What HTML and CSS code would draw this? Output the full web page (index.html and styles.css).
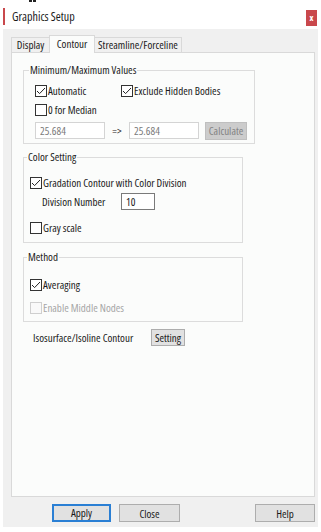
FILE: index.html
```html
<!DOCTYPE html>
<html lang="en">
<head>
  <meta charset="UTF-8">
  <title>Graphics Setup</title>
  <link rel="stylesheet" href="styles.css">
</head>
<body>

  <div class="titlebar">
    <span class="grip"></span>
    <span class="accent"></span>
    <span class="title">Graphics Setup</span>
    <button class="close" type="button">x</button>
  </div>

  <div class="dialog">
    <div class="tabs">
      <div class="tab tab-display">Display</div>
      <div class="tab tab-active">Contour</div>
      <div class="tab tab-stream">Streamline/Forceline</div>
    </div>

    <div class="panel">

      <div class="group group-minmax">
        <span class="legend">Minimum/Maximum Values</span>
        <div class="row">
          <label class="check check-auto"><span class="box checked"></span>Automatic</label>
          <label class="check"><span class="box checked"></span>Exclude Hidden Bodies</label>
        </div>
        <div class="row">
          <label class="check"><span class="box"></span>0 for Median</label>
        </div>
        <div class="row row-range">
          <input class="field field-off" type="text" value="25.684" disabled>
          <span class="arrow">=&gt;</span>
          <input class="field field-off" type="text" value="25.684" disabled>
          <button class="btn btn-off" type="button" disabled>Calculate</button>
        </div>
      </div>

      <div class="group group-color">
        <span class="legend">Color Setting</span>
        <div class="row">
          <label class="check"><span class="box checked"></span>Gradation Contour with Color Division</label>
        </div>
        <div class="row row-division">
          <span class="division-label">Division Number</span>
          <input class="field field-num" type="text" value="10">
        </div>
        <div class="row row-gray">
          <label class="check"><span class="box"></span>Gray scale</label>
        </div>
      </div>

      <div class="group group-method">
        <span class="legend">Method</span>
        <div class="row">
          <label class="check"><span class="box checked"></span>Averaging</label>
        </div>
        <div class="row row-middle">
          <label class="check check-off"><span class="box"></span>Enable Middle Nodes</label>
        </div>
      </div>

      <div class="row row-iso">
        <span class="iso-label">Isosurface/Isoline Contour</span>
        <button class="btn btn-setting" type="button">Setting</button>
      </div>

    </div>

    <div class="footer">
      <button class="btn btn-apply" type="button">Apply</button>
      <button class="btn btn-close" type="button">Close</button>
      <button class="btn btn-help" type="button">Help</button>
    </div>
    <span class="corner"></span>
  </div>

</body>
</html>
```
FILE: styles.css
```css
body {
  margin: 0;
  background: #fff;
  font-family: "Open Sans", sans-serif;
  font-stretch: 84%;
  font-size: 11px;
  line-height: 14px;
  color: #1a1a1a;
}
button, input {
  font: inherit;
  color: inherit;
}

/* title bar */
.titlebar {
  position: relative;
  height: 29px;
  display: flex;
  align-items: center;
  padding: 0 4px 0 3px;
}
.grip {
  position: absolute;
  left: 29px;
  top: 0;
  width: 7px;
  height: 2px;
  background: linear-gradient(90deg, #222 0 3px, transparent 3px 4px, #222 4px);
}
.accent {
  width: 2px;
  height: 17px;
  background: #c9484c;
  margin-top: 4px;
}
.title {
  margin-left: 7px;
  font-size: 12px;
  margin-top: 4px;
}
.close {
  margin-left: auto;
  margin-top: 6px;
  width: 11px;
  height: 16px;
  padding: 0;
  border: none;
  background: #c9484c;
  color: #fff;
  font-size: 9px;
  font-weight: bold;
  line-height: 14px;
}

/* dialog body */
.dialog {
  position: relative;
  margin: 0 3px;
  height: 498px;
  box-sizing: border-box;
  background: #f0f0f0;
  padding: 6px 3px 0 8px;
}
.tabs {
  display: flex;
  align-items: flex-end;
  height: 17px;
}
.tab {
  box-sizing: border-box;
  height: 15px;
  line-height: 14px;
  text-align: center;
  background: #f0f0f0;
  border-top: 1px solid #d9d9d9;
}
.tab-display {
  width: 38px;
  border-left: 1px solid #d9d9d9;
}
.tab-active {
  position: relative;
  z-index: 1;
  width: 46px;
  height: 18px;
  line-height: 15px;
  margin-bottom: -1px;
  background: #fbfcfb;
  border: 1px solid #d9d9d9;
  border-bottom: none;
}
.tab-stream {
  width: 87px;
  border-right: 1px solid #d9d9d9;
}
.panel {
  box-sizing: border-box;
  height: 445px;
  background: #fbfcfb;
  border: 1px solid #d9d9d9;
  padding: 17px 0 0 11px;
}

/* group boxes */
.group {
  position: relative;
  box-sizing: border-box;
  border: 1px solid #dcdcdc;
}
.legend {
  position: absolute;
  top: -8px;
  padding: 0 1px;
  background: #fbfcfb;
}
.row {
  display: flex;
  align-items: center;
  height: 19px;
}
.check {
  display: flex;
  align-items: center;
}
.box {
  box-sizing: border-box;
  width: 12px;
  height: 12px;
  margin-right: 1px;
  border: 1px solid #333;
  background: #fff;
}
.box.checked {
  background: #fff url("data:image/svg+xml,%3Csvg xmlns='http://www.w3.org/2000/svg' width='10' height='10'%3E%3Cpath d='M1 5l2.6 2.6L9 2' fill='none' stroke='%23222' stroke-width='1'/%3E%3C/svg%3E") center no-repeat;
}
.check-off {
  color: #a6a6a6;
}
.check-off .box {
  border-color: #cfcfcf;
  background: #f9f9f9;
}
.field {
  box-sizing: border-box;
  height: 17px;
  padding: 0 4px;
  background: #fff;
  border: 1px solid #7a7a7a;
  outline: none;
}
.field-off {
  width: 70px;
  border-color: #d4d4d4;
  color: #7a7a7a;
}
.btn {
  box-sizing: border-box;
  height: 18px;
  padding: 0;
  background: #e1e1e1;
  border: 1px solid #adadad;
  line-height: 15px;
}
.btn-off {
  width: 42px;
  background: #cccccc;
  border-color: #bfbfbf;
  color: #838383;
  margin-left: 6px;
}

.group-minmax {
  width: 232px;
  height: 74px;
  padding: 10px 0 0 11px;
}
.group-minmax .legend { left: 5px; }
.check-auto { width: 86px; }
.row-range { margin-top: 2px; }
.arrow {
  width: 24px;
  text-align: center;
}

.group-color {
  width: 220px;
  height: 86px;
  margin-top: 13px;
  padding: 15px 0 0 6px;
}
.group-color .legend,
.group-method .legend { left: 3px; }
.division-label {
  width: 79px;
  padding-left: 12px;
}
.field-num {
  width: 34px;
  height: 17px;
}
.row-gray { margin-top: 7px; }

.group-method {
  width: 220px;
  height: 65px;
  margin-top: 14px;
  padding: 17px 0 0 6px;
}
.row-middle { margin-top: 4px; }

.row-iso {
  margin-top: 6px;
  padding-left: 10px;
}
.iso-label { width: 118px; }
.btn-setting {
  width: 34px;
  height: 17px;
}

/* footer buttons */
.footer {
  display: flex;
  margin-top: 7px;
  padding-left: 41px;
}
.btn-apply {
  width: 59px;
  border: 2px solid #2a7fd4;
  line-height: 14px;
}
.btn-close {
  width: 61px;
  margin-left: 8px;
}
.btn-help {
  width: 60px;
  margin-left: auto;
}
.corner {
  position: absolute;
  left: 0;
  bottom: -1px;
  width: 2px;
  height: 1px;
  background: #4a6a5a;
}
```
